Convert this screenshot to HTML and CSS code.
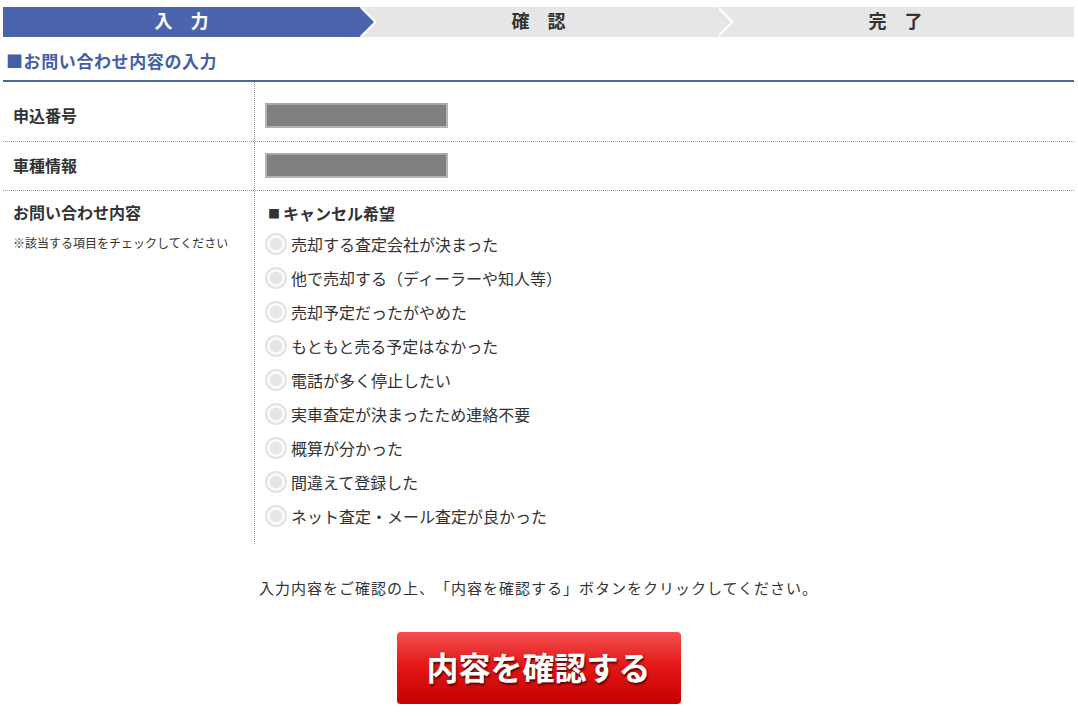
FILE: index.html
```html
<!DOCTYPE html>
<html lang="ja">
<head>
<meta charset="utf-8">
<title>お問い合わせ内容の入力</title>
<link rel="stylesheet" href="styles.css">
</head>
<body>
<div class="page">
  <ol class="steps">
    <li class="step step-arrow is-active">入　力</li>
    <li class="step step-arrow">確　認</li>
    <li class="step">完　了</li>
  </ol>

  <h2 class="section-title">■お問い合わせ内容の入力</h2>

  <div class="form-table">
    <div class="form-row row-first">
      <div class="form-label"><span class="label-main">申込番号</span></div>
      <div class="form-value"><span class="masked"></span></div>
    </div>
    <div class="form-row row-second">
      <div class="form-label"><span class="label-main">車種情報</span></div>
      <div class="form-value"><span class="masked"></span></div>
    </div>
    <div class="form-row row-last">
      <div class="form-label">
        <span class="label-main">お問い合わせ内容</span>
        <span class="label-note">※該当する項目をチェックしてください</span>
      </div>
      <div class="form-value">
        <p class="group-title"><span class="sq">■</span>キャンセル希望</p>
        <ul class="radio-list">
          <li class="radio-item"><span class="radio"></span>売却する査定会社が決まった</li>
          <li class="radio-item"><span class="radio"></span>他で売却する（ディーラーや知人等）</li>
          <li class="radio-item"><span class="radio"></span>売却予定だったがやめた</li>
          <li class="radio-item"><span class="radio"></span>もともと売る予定はなかった</li>
          <li class="radio-item"><span class="radio"></span>電話が多く停止したい</li>
          <li class="radio-item"><span class="radio"></span>実車査定が決まったため連絡不要</li>
          <li class="radio-item"><span class="radio"></span>概算が分かった</li>
          <li class="radio-item"><span class="radio"></span>間違えて登録した</li>
          <li class="radio-item"><span class="radio"></span>ネット査定・メール査定が良かった</li>
        </ul>
      </div>
    </div>
  </div>

  <p class="note">入力内容をご確認の上、「内容を確認する」ボタンをクリックしてください。</p>

  <div class="actions">
    <button class="confirm-btn" type="button">内容を確認する</button>
  </div>
</div>
</body>
</html>
```

FILE: styles.css
```css
html, body {
  margin: 0;
  padding: 0;
  background: #fff;
}

body {
  font-family: "Noto Sans CJK JP", "Noto Sans", sans-serif;
  color: #333;
  text-spacing-trim: space-all;
}

.page {
  padding: 7px 4px 0 3px;
}

/* ---- step bar ---- */
.steps {
  display: flex;
  list-style: none;
  margin: 0;
  padding: 0;
  height: 30px;
  background: #e6e6e6;
}

.step {
  flex: 1;
  position: relative;
  display: flex;
  align-items: center;
  justify-content: center;
  box-sizing: border-box;
  padding-bottom: 4px;
  font-size: 18px;
  font-weight: bold;
  line-height: 1;
  color: #333;
  background: #e6e6e6;
}

.step.is-active {
  background: #4a65ad;
  color: #fff;
}

.step-arrow::before,
.step-arrow::after {
  content: "";
  position: absolute;
  top: 0;
  width: 0;
  height: 0;
  border-style: solid;
  border-width: 15px 0 15px 15px;
  z-index: 1;
}

.step-arrow::before {
  right: -17px;
  border-color: transparent transparent transparent #fff;
}

.step-arrow::after {
  right: -14px;
  border-color: transparent transparent transparent #e6e6e6;
  z-index: 2;
}

.step-arrow.is-active::after {
  border-left-color: #4a65ad;
}

/* ---- section title ---- */
.section-title {
  margin: 0;
  padding: 12px 3px 7px;
  font-size: 17px;
  line-height: 24px;
  letter-spacing: 0.6px;
  font-weight: bold;
  color: #4360a6;
  border-bottom: 2px solid #4f6697;
}

/* ---- form table ---- */
.form-row {
  display: flex;
}

.row-first,
.row-second {
  border-bottom: 1px dotted #9a9a9a;
}

.form-label {
  width: 241px;
  flex: none;
  padding-left: 10px;
  border-right: 1px dotted #9a9a9a;
  display: flex;
  flex-direction: column;
}

.form-value {
  flex: 1;
  padding-left: 10px;
}

.label-main {
  font-size: 16px;
  font-weight: bold;
  line-height: 25px;
  color: #333;
}

.row-first .form-label,
.row-first .form-value {
  padding-top: 21px;
  padding-bottom: 13px;
}

.row-second .form-label,
.row-second .form-value {
  padding-top: 11px;
  padding-bottom: 12px;
}

.masked {
  display: block;
  box-sizing: border-box;
  width: 183px;
  height: 25px;
  background: #808080;
  border: 2px solid #b4b4b4;
  border-top-color: #a8a8a8;
}

.row-last .form-label,
.row-last .form-value {
  padding-top: 9px;
  padding-bottom: 11px;
}

.label-note {
  margin-top: 9px;
  font-size: 12px;
  line-height: 18px;
  color: #333;
}

.group-title {
  margin: 0;
  font-size: 16px;
  font-weight: bold;
  line-height: 26px;
  color: #333;
  padding-left: 3px;
}

.group-title .sq {
  font-size: 12px;
  letter-spacing: 3px;
  vertical-align: 1px;
}

.radio-list {
  list-style: none;
  margin: 0;
  padding: 0;
}

.radio-item {
  display: flex;
  align-items: center;
  height: 34px;
  font-size: 16px;
  color: #333;
}

.radio {
  box-sizing: border-box;
  width: 22px;
  height: 22px;
  flex: none;
  margin-right: 4px;
  border-radius: 50%;
  border: 2px solid #e2e2e2;
  background: radial-gradient(circle, #e6e6e6 0, #e6e6e6 6px, #fbfbfb 6.5px);
}

/* ---- note & button ---- */
.note {
  margin: 33px 0 0;
  text-align: center;
  font-size: 15px;
  line-height: 22px;
  letter-spacing: 1px;
  color: #333;
}

.actions {
  display: flex;
  justify-content: center;
  padding-top: 33px;
}

.confirm-btn {
  width: 284px;
  height: 72px;
  border: none;
  border-radius: 4px;
  background: linear-gradient(to bottom, #f25050 0%, #e41818 45%, #c60000 100%);
  box-shadow: 0 4px 0 #cfcfcf;
  color: #fff;
  font-family: "Noto Sans CJK JP", sans-serif;
  font-size: 32px;
  font-weight: bold;
  line-height: 1;
  text-shadow: 1px 2px 2px rgba(70, 0, 0, 0.85);
  cursor: pointer;
  padding: 0 0 5px;
}
```
